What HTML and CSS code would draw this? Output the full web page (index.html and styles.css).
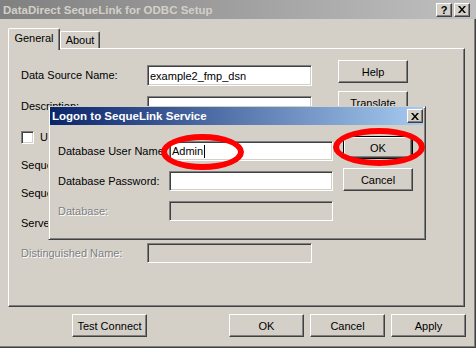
FILE: index.html
```html
<!DOCTYPE html>
<html>
<head>
<title>DataDirect SequeLink for ODBC Setup</title>
<link rel="stylesheet" href="styles.css">
</head>
<body>
<div class="window">
    <div class="titlebar">
        <span class="title">DataDirect SequeLink for ODBC Setup</span>
        <span class="cbtn">?</span>
        <span class="cbtn cbtn-close">
            <svg width="8" height="7" viewBox="0 0 8 7"><path d="M0 0h2l2 2.5 2-2.5h2l-3 3.5 3 3.5h-2l-2-2.5-2 2.5h-2l3-3.5z" fill="#000"/></svg>
        </span>
    </div>
    <div class="client">
        <div class="tabs">
            <div class="tab tab-general active">General</div>
            <div class="tab tab-about">About</div>
        </div>
        <div class="panel">
            <div class="row row-top">
                <span class="label">Data Source Name:</span>
                <div class="field">example2_fmp_dsn</div>
                <span class="btn">Help</span>
            </div>
            <div class="row row-top">
                <span class="label">Description:</span>
                <div class="field"></div>
                <span class="btn">Translate</span>
            </div>
            <div class="row row-check">
                <span class="check"></span>
                <span>Use LDAP</span>
            </div>
            <div class="row row-short">
                <span class="label">SequeLink Server Host:</span>
                <div class="field"></div>
            </div>
            <div class="row">
                <span class="label">SequeLink Server Port:</span>
                <div class="field"></div>
            </div>
            <div class="row">
                <span class="label">Server Data Source:</span>
                <div class="field"></div>
            </div>
            <div class="row">
                <span class="label disabled">Distinguished Name:</span>
                <div class="field field-off"></div>
            </div>
        </div>
        <div class="footer">
            <span class="btn btn-wide">Test Connect</span>
            <span class="spacer"></span>
            <span class="btn btn-wide">OK</span>
            <span class="btn btn-wide">Cancel</span>
            <span class="btn btn-wide">Apply</span>
        </div>
    </div>

    <div class="dialog">
        <div class="dlg-title">
            <span class="dlg-caption">Logon to SequeLink Service</span>
            <span class="cbtn cbtn-close">
                <svg width="8" height="7" viewBox="0 0 8 7"><path d="M0 0h2l2 2.5 2-2.5h2l-3 3.5 3 3.5h-2l-2-2.5-2 2.5h-2l3-3.5z" fill="#000"/></svg>
            </span>
        </div>
        <div class="dlg-body">
            <div class="dlg-form">
                <div class="row">
                    <span class="dlg-label">Database User Name:</span>
                    <div class="field dlg-field">Admin<span class="caret"></span></div>
                </div>
                <div class="row">
                    <span class="dlg-label">Database Password:</span>
                    <div class="field dlg-field"></div>
                </div>
                <div class="row">
                    <span class="dlg-label disabled">Database:</span>
                    <div class="field dlg-field field-off"></div>
                </div>
            </div>
            <div class="dlg-buttons">
                <span class="btn btn-default">OK</span>
                <span class="btn">Cancel</span>
            </div>
        </div>
    </div>

    <div class="mark mark-user"></div>
    <div class="mark mark-ok"></div>
</div>
</body>
</html>
```

FILE: styles.css
```css
body {
    margin: 0;
    background-color: #d4d0c8;
    font-family: "Liberation Sans", Arial, sans-serif;
    font-size: 11px;
    color: #000;
}
.window {
    position: relative;
    width: 476px;
    height: 348px;
    overflow: hidden;
    display: flex;
    flex-direction: column;
}
.titlebar {
    height: 19px;
    flex: none;
    display: flex;
    align-items: center;
    padding: 0 6px 0 3px;
    background: linear-gradient(to right, #808080, #c0c0c0);
}
.title {
    flex: 1;
    font-weight: bold;
    font-size: 11.5px;
    color: #d4d0c8;
}
.cbtn {
    width: 16px;
    height: 14px;
    box-sizing: border-box;
    margin-left: 2px;
    display: flex;
    align-items: center;
    justify-content: center;
    background-color: #d4d0c8;
    border: 1px solid;
    border-color: #fff #404040 #404040 #fff;
    box-shadow: inset -1px -1px #808080;
    font-weight: bold;
    font-size: 11px;
    line-height: 12px;
}

/* main window body */
.client {
    flex: 1;
    box-sizing: border-box;
    padding: 9px 0 0 8px;
    border-right: 1px solid #404040;
    border-bottom: 1px solid #404040;
    box-shadow: inset -1px -1px #808080;
}
.tabs {
    display: flex;
    align-items: flex-end;
    height: 20px;
}
.tab {
    height: 17px;
    box-sizing: border-box;
    display: flex;
    align-items: center;
    justify-content: center;
    border: 1px solid;
    border-bottom: none;
    border-color: #fff #404040 #404040 #fff;
    box-shadow: inset -1px 0 #808080;
    border-radius: 2px 2px 0 0;
    background-color: #d4d0c8;
}
.tab-general { width: 52px; }
.tab-about { width: 40px; }
.tab.active {
    height: 22px;
    margin-bottom: -2px;
    padding-bottom: 3px;
    position: relative;
    z-index: 1;
}
.panel {
    width: 457px;
    height: 259px;
    box-sizing: border-box;
    padding: 11px 0 0 12px;
    border: 1px solid;
    border-color: #fff #404040 #404040 #fff;
    box-shadow: inset -1px -1px #808080;
}
.row {
    display: flex;
    align-items: center;
    height: 30px;
}
.row-top {
    align-items: flex-start;
    height: 31px;
}
.row-short { height: 26px; }
.label {
    width: 126px;
    flex: none;
    white-space: nowrap;
    overflow: hidden;
}
.row-top .label {
    line-height: 21px;
    margin-top: 5px;
}
.disabled {
    color: #808080;
    text-shadow: 1px 1px #fff;
}
.field {
    width: 165px;
    height: 20px;
    flex: none;
    box-sizing: border-box;
    display: flex;
    align-items: center;
    padding: 0 2px;
    background-color: #fff;
    border: 1px solid;
    border-color: #808080 #fff #fff #808080;
    box-shadow: inset 1px 1px #404040, inset -1px -1px #d4d0c8;
    white-space: nowrap;
}
.row-top .field {
    height: 21px;
    margin-top: 5px;
}
.field-off { background-color: #d4d0c8; }
.check {
    width: 13px;
    height: 13px;
    box-sizing: border-box;
    margin-right: 6px;
    background-color: #fff;
    border: 1px solid;
    border-color: #808080 #fff #fff #808080;
    box-shadow: inset 1px 1px #404040, inset -1px -1px #d4d0c8;
}
.btn {
    width: 70px;
    height: 23px;
    flex: none;
    box-sizing: border-box;
    display: flex;
    align-items: center;
    justify-content: center;
    background-color: #d4d0c8;
    border: 1px solid;
    border-color: #fff #404040 #404040 #fff;
    box-shadow: inset -1px -1px #808080;
}
.row-top .btn { margin-left: 26px; }
.btn-wide { width: 75px; }
.btn-default {
    border-color: #000;
    box-shadow: inset 1px 1px #fff, inset -1px -1px #404040, inset -2px -2px #808080;
}
.footer {
    display: flex;
    gap: 6px;
    margin-top: 7px;
    padding-left: 64px;
    width: 458px;
    box-sizing: border-box;
}
.spacer { flex: 1; }

/* logon dialog */
.dialog {
    position: absolute;
    left: 48px;
    top: 106px;
    width: 378px;
    height: 134px;
    box-sizing: border-box;
    padding: 0 2px 2px 1px;
    background-color: #d4d0c8;
    border: 1px solid;
    border-color: #d4d0c8 #404040 #404040 #d4d0c8;
    box-shadow: inset 1px 1px #fff, inset -1px -1px #808080;
    z-index: 2;
}
.dlg-title {
    height: 18px;
    display: flex;
    align-items: center;
    padding-left: 2px;
    background: linear-gradient(to right, #0a246a, #a6caf0);
}
.dlg-caption {
    flex: 1;
    font-weight: bold;
    font-size: 11.5px;
    color: #fff;
}
.dlg-body {
    display: flex;
    padding: 10px 0 0 8px;
}
.dlg-form { margin-top: 1px; }
.dlg-label {
    width: 111px;
    flex: none;
    white-space: nowrap;
}
.dlg-field { width: 164px; }
.caret {
    display: inline-block;
    width: 1px;
    height: 13px;
    margin-left: 1px;
    background-color: #000;
}
.dlg-buttons {
    display: flex;
    flex-direction: column;
    gap: 9px;
    margin-left: 10px;
    margin-top: 1px;
}

/* red annotation rings */
.mark {
    position: absolute;
    box-sizing: border-box;
    border: 6px solid #f00;
    border-radius: 50%;
    z-index: 3;
}
.mark-user {
    left: 161px;
    top: 134px;
    width: 83px;
    height: 36px;
}
.mark-ok {
    left: 333px;
    top: 128px;
    width: 92px;
    height: 38px;
}
```
